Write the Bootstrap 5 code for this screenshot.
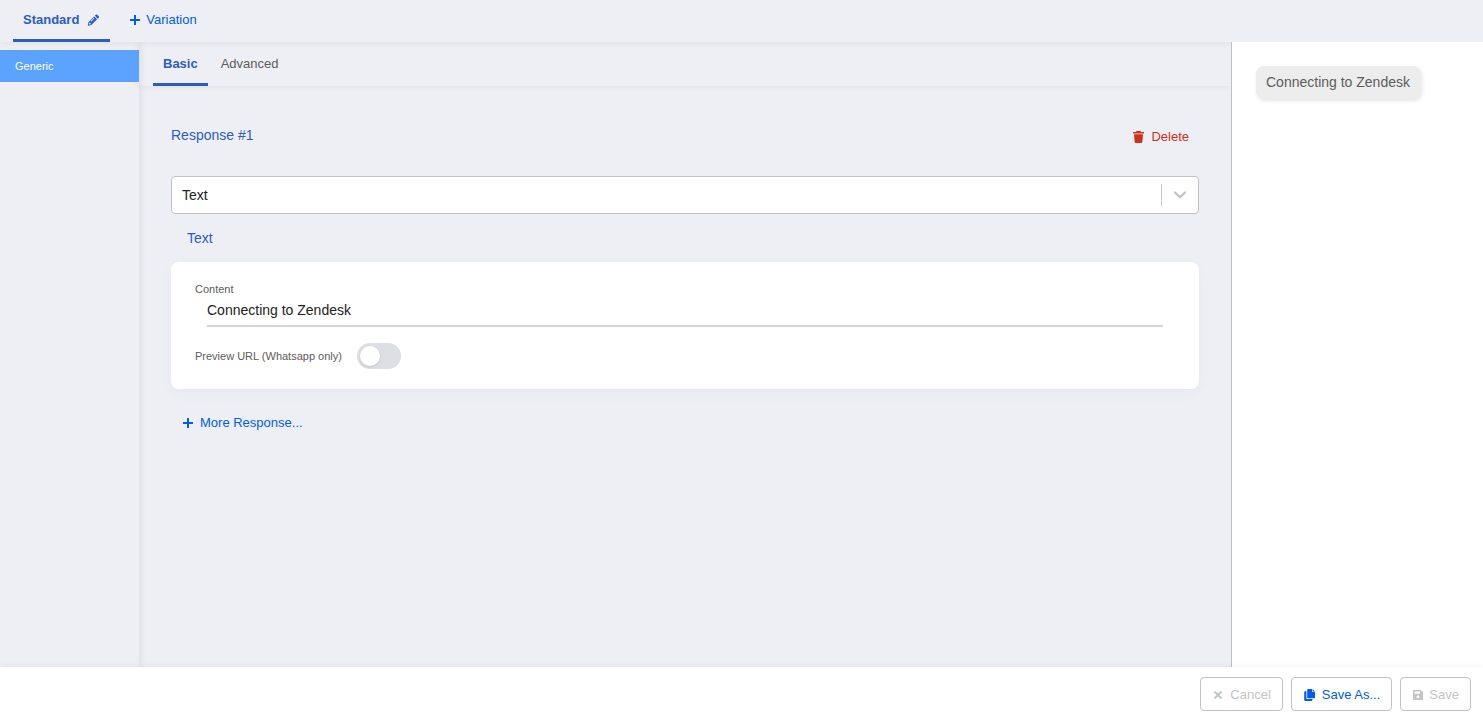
<!DOCTYPE html>
<html lang="en">
<head>
<meta charset="utf-8">
<meta name="viewport" content="width=device-width, initial-scale=1">
<title>Response editor</title>
<link href="https://cdn.jsdelivr.net/npm/bootstrap@5.3.0/dist/css/bootstrap.min.css" rel="stylesheet">
<style>
  body { font-family: "Liberation Sans", Arial, sans-serif; font-size: 14px; line-height: 20px; background: #eeeff5; color: #222; }
  svg { display: block; fill: currentColor; flex: none; }
  .text-brand { color: #2b5cc4; }
  .text-action, .text-action:hover { color: #005cee; }
  .text-danger-dark, .text-danger-dark:hover { color: #d0311b; }
  .btn-plain { border: 0; padding: 0; line-height: 20px; font-size: 13px; display: flex; align-items: center; gap: 7px; }
  .tab-bar { box-shadow: 0 0 8px rgba(0, 0, 0, .08); position: relative; }
  .tab-link { display: flex; align-items: center; font-size: 13px; line-height: 20px; padding: 0 10px; color: #5c5c5c; text-decoration: none; border-bottom: 3px solid transparent; }
  .tab-link.active { color: #2b5cc4; font-weight: 700; border-color: #2b5cc4; }
  .top-bar { height: 42px; padding-left: 13px; background: #eeeff5; z-index: 1; }
  .top-bar .btn-plain { gap: 6px; padding-bottom: 3px; }
  .sub-bar { height: 44px; padding-left: 14px; gap: 3px; }
  .sub-bar .tab-link { padding-top: 2px; }
  .channel-list { width: 139px; padding-top: 8px; box-shadow: 0 0 8px rgba(0, 0, 0, .1); z-index: 1; clip-path: inset(0 -12px 0 0); }
  .channel-item { font-size: 11px; line-height: 20px; padding: 6px 15px; background: #5ca3ff; color: #fff; text-decoration: none; }
  .editor-pad { padding: 39px 32px; }
  .response-head { padding-right: 10px; margin-bottom: 29px; }
  .response-head h2 { font-size: 14px; line-height: 20px; }
  .response-head .btn-plain { padding-top: 2px; }
  .type-picker { position: relative; }
  .type-picker .form-select { height: 38px; padding: 8px 48px 8px 10px; font-size: 14px; line-height: 20px; background: #fff; border: 1px solid #c2c2c2; border-radius: 4px; color: #222; }
  .picker-mark { position: absolute; top: 8px; bottom: 8px; right: 0; width: 38px; padding-right: 2px; border-left: 1px solid #c8c8c8; color: #c2c2c2; pointer-events: none; }
  .section-name { margin: 14px 0; }
  .panel { background: #fff; border-radius: 8px; padding: 20px 24px; box-shadow: 0 4px 16px rgba(0, 0, 0, .03); }
  .field-name { font-size: 11px; line-height: 14px; color: #5c5c5c; }
  .line-input { display: block; width: auto; align-self: stretch; border: 0; border-bottom: 2px solid #d5d5d5; border-radius: 0; margin: 0 12px 16px; padding: 4px 0 6px; height: 31px; font-size: 14px; line-height: 20px; color: #222; }
  .toggle-row { gap: 15px; }
  .toggle { appearance: none; width: 44px; height: 26px; margin: 0; border-radius: 13px; background: #dedfe4; padding: 3px; }
  .toggle::before { content: ""; display: block; width: 20px; height: 20px; border-radius: 50%; background: #fff; box-shadow: 0 1px 3px rgba(0, 0, 0, .12); }
  .toggle:checked { background: #2b5cc4; }
  .toggle:checked::before { margin-left: 18px; }
  .preview { width: 252px; padding: 24px; background: #fff; border-left: 1px solid #bfc0c4; z-index: 1; }
  .bubble { padding: 6px 11px 7px 10px; background: #ededed; color: #5c5c5c; border-radius: 8px; box-shadow: 1px 2px 4px rgba(0, 0, 0, .1); }
  .action-bar { height: 55px; padding: 0 12px 1px; background: #fff; box-shadow: 0 0 6px rgba(0, 0, 0, .08); position: relative; z-index: 2; }
  .btn-box { display: flex; align-items: center; gap: 5px; height: 34px; padding: 2px 11px 0; font-size: 13px; line-height: 20px; border: 1px solid #c2c2c2; border-radius: 4px; background: #fff; }
  .btn-box:disabled { color: #c4c4c4; border-color: #c2c2c2; background: #fff; opacity: 1; }
</style>
</head>
<body class="vh-100 d-flex flex-column overflow-hidden">
  <header class="tab-bar top-bar d-flex">
    <a class="tab-link active" href="#standard">Standard
      <svg class="ms-2" width="13" height="14" viewBox="0 0 14 14" aria-hidden="true"><path fill-rule="evenodd" d="M9.5 1.3Q10.2.7 11 1.3L12.7 3Q13.3 3.8 12.7 4.5L11.6 5.6 8.4 2.400ZM7.700 3.100 10.900 6.300 4.700 12.500 1.300 13.100Q.9 13.100.9 12.700L1.500 9.300ZM2.400 9.800 2.100 11.900 4.200 11.600 3.900 10.500 2.900 10.200ZM4.500 8.800 7.900 5.400 7.300 4.800 3.900 8.200Z"/></svg>
    </a>
    <button type="button" class="btn btn-plain text-action ms-3 ps-1">
      <svg width="10" height="10" viewBox="0 0 10 10" aria-hidden="true"><path d="M4 0h2v4h4v2H6v4H4V6H0V4h4z"/></svg>
      <span>Variation</span>
    </button>
  </header>

  <div class="d-flex flex-grow-1">
    <nav class="channel-list position-relative flex-shrink-0" aria-label="Channels">
      <a class="channel-item d-block" href="#generic">Generic</a>
    </nav>

    <main class="flex-grow-1">
      <div class="tab-bar sub-bar d-flex">
        <a class="tab-link active" href="#basic">Basic</a>
        <a class="tab-link" href="#advanced">Advanced</a>
      </div>
      <div class="editor-pad d-flex flex-column">
        <div class="response-head d-flex justify-content-between align-items-start">
          <h2 class="text-brand fw-normal mt-0 mb-0"><label for="type">Response #1</label></h2>
          <button type="button" class="btn btn-plain text-danger-dark">
            <svg width="11" height="12" viewBox="0 0 11 12" aria-hidden="true"><path d="M3.500 0h4l.5 1H11v1.500H0V1h3zM1 3.300h9l-.7 7.700a1 1 0 0 1-1 .9H2.700a1 1 0 0 1-1-.9z"/></svg>
            <span>Delete</span>
          </button>
        </div>
        <div class="type-picker">
          <select class="form-select" id="type"><option>Text</option></select>
          <span class="picker-mark d-flex align-items-center justify-content-center">
            <svg width="14" height="8" viewBox="0 0 14 8" aria-hidden="true"><path d="M2 1.500 7 6.300 12 1.500" fill="none" stroke="currentColor" stroke-width="2.200" stroke-linecap="round" stroke-linejoin="round"/></svg>
          </span>
        </div>
        <div class="section-name text-brand ps-3">Text</div>
        <section class="panel d-flex flex-column">
          <label class="field-name" for="content">Content</label>
          <input class="line-input" id="content" type="text" value="Connecting to Zendesk">
          <div class="toggle-row d-flex align-items-center">
            <label class="field-name" for="preview-url">Preview URL (Whatsapp only)</label>
            <input class="toggle" id="preview-url" type="checkbox" role="switch">
          </div>
        </section>
        <button type="button" class="btn btn-plain text-action align-self-start ms-2 ps-1 mt-4">
          <svg width="10" height="10" viewBox="0 0 10 10" aria-hidden="true"><path d="M4 0h2v4h4v2H6v4H4V6H0V4h4z"/></svg>
          <span>More Response...</span>
        </button>
      </div>
    </main>

    <aside class="preview position-relative flex-shrink-0">
      <span class="bubble d-inline-block text-nowrap">Connecting to Zendesk</span>
    </aside>
  </div>

  <footer class="action-bar d-flex align-items-center justify-content-end gap-2">
    <button type="button" class="btn btn-box" disabled>
      <svg width="13" height="8" viewBox="0 0 13 8" aria-hidden="true"><path d="M2.500.5 9.500 7.500M9.500.5 2.500 7.500" fill="none" stroke="currentColor" stroke-width="2"/></svg>Cancel
    </button>
    <button type="button" class="btn btn-box text-action">
      <svg width="14" height="12" viewBox="-1 0 14 12" aria-hidden="true"><path d="M4 0h4v3h3v5.500a.8.8 0 0 1-.8.8H4a.8.8 0 0 1-.8-.8V.8A.8.8 0 0 1 4 0zM8.600 0 11 2.400H8.600zM1 2.200h1.400V9.200a.9.9 0 0 0 .9.9h5.100v1a.8.8 0 0 1-.8.800H1a.8.8 0 0 1-.8-.8V3a.8.8 0 0 1 .8-.8z"/></svg>Save As...
    </button>
    <button type="button" class="btn btn-box" disabled>
      <svg width="12" height="10" viewBox="0 0 12 10" aria-hidden="true"><path fill-rule="evenodd" d="M2 0h6.500L11 2.300V9a1 1 0 0 1-1 1H2a1 1 0 0 1-1-1V1a1 1 0 0 1 1-1zM2.500 1.500v2.300h5.500V1.500zM6 5.200a1.500 1.500 0 1 0 0 3 1.500 1.500 0 0 0 0-3z"/></svg>Save
    </button>
  </footer>
<script src="https://cdn.jsdelivr.net/npm/bootstrap@5.3.0/dist/js/bootstrap.bundle.min.js"></script>
</body>
</html>
